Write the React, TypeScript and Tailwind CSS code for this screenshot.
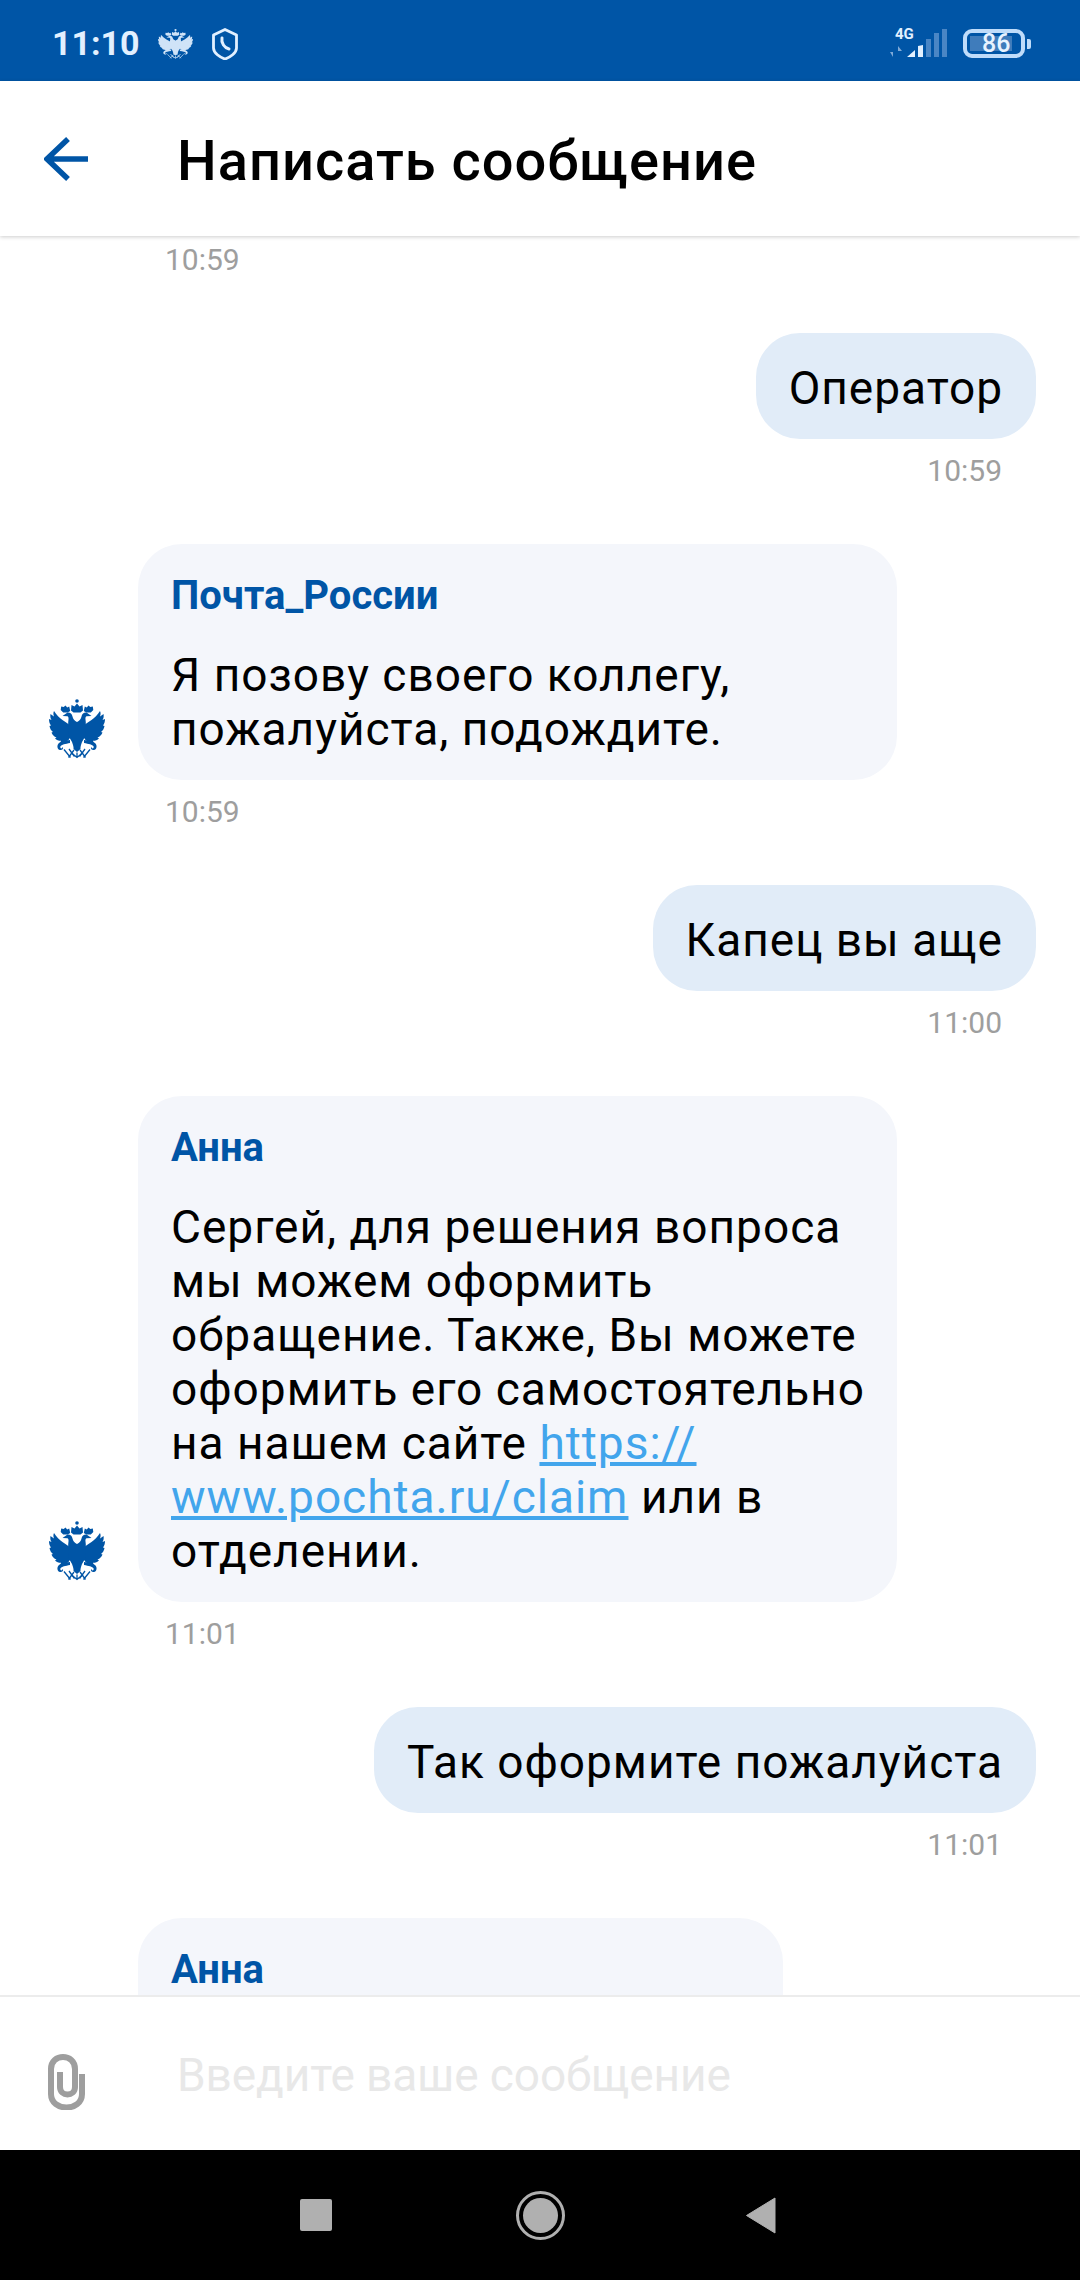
import type { ReactNode } from 'react';

// one half of the eagle, the other half is mirrored
function EagleHalf() {
    return (
        <>
            <path d="M22 27C17 23 10 20 5 12c-1 2-.6 4 0 5.500L1.500 15c-.5 2.500 0 4.500 1 6L0 20c0 2.500.5 4.500 2 6.500L.5 27c.5 2.500 1.500 4.500 3.500 6l-1.500.5c1 2.500 2.500 4 5 5l-1.500 1c1.500 1.500 3.500 2.300 6 2.300l-.5 1.700c3 .5 6-.5 8-2.500L23 36z" />
            <path d="M28 23c-2.500-1-4-3-4.500-5.500-.5-2.700-2.500-4.300-5-4L13.500 17l5 .3c1 .4 1.200 1.700 1 3.200-.5 3.500-.5 6.500.5 9.500l-1 6 4 7 2 6 3 3z" />
            <path d="M16.500 6.500l1.700 2 2-1 1 4.500-2.500 1.500h-4.500l-2.500-2.500.5-3.500 2.500.5z" />
            <path d="M21 41c-5 .5-9.500 1-11.500 3.500-2 2.700-1 6 1.500 6.500 2 .4 3.500-1 3-3l-1.500 1.500c-1 0-1.500-1-1-2.200 1-1.800 5-2.300 9.500-3.300z" />
            <path d="M15 50.500l6.500 8M20 50l5.500 7.500M25 51l-5.500 7.500" stroke="currentColor" strokeWidth="1.300" fill="none" />
        </>
    );
}

function Eagle({ className }: { className?: string }) {
    return (
        <svg viewBox="0 0 56 60" preserveAspectRatio="none" className={className} fill="currentColor">
            <circle cx="28" cy="2" r="1.800" />
            <path d="M22.500 6l3 1.500L28 4.500l2.500 3 3-1.500.5 5.500-2.500 2h-7l-2.500-2z" />
            <path d="M26.500 24h3l2 26-3.500 3-3.500-3z" />
            <path d="M22 53.500l6 5 6-5M28 53.500v5" stroke="currentColor" strokeWidth="1.300" fill="none" />
            <EagleHalf />
            <g transform="translate(56 0) scale(-1 1)">
                <EagleHalf />
            </g>
        </svg>
    );
}

function UserMessage({ text, time }: { text: string; time: string }) {
    return (
        <div className="flex flex-col items-end pr-[44px] mt-[55px]">
            <div className="bg-[#e1ecf8] rounded-[44px] px-[33px] pt-[28px] pb-[24px] text-[46px] leading-[54px] tracking-[1px] text-black">
                {text}
            </div>
            <div className="mt-[14px] pr-[34px] text-[30px] leading-[36px] text-[#9e9e9e]">{time}</div>
        </div>
    );
}

function BotMessage({ name, time, width, children }: { name: string; time: string; width: string; children: ReactNode }) {
    return (
        <div className="mt-[55px] pl-[138px] flex flex-col items-start">
            <div className="relative">
                <Eagle className="absolute left-[-89px] bottom-[21px] w-[56px] h-[60px] text-[#0055a6]" />
                <div className={`${width} bg-[#f4f6fb] rounded-[44px] px-[33px] pt-[28px] pb-[24px]`}>
                    <div className="text-[40px] leading-[47px] font-bold text-[#0055a6]">{name}</div>
                    <div className="mt-[29px] text-[46px] leading-[54px] tracking-[1px] text-black whitespace-nowrap">{children}</div>
                </div>
            </div>
            <div className="mt-[14px] pl-[27px] text-[30px] leading-[36px] text-[#9e9e9e]">{time}</div>
        </div>
    );
}

export default function App() {
    return (
        <div className="w-[1080px] h-[2280px] flex flex-col bg-white overflow-hidden font-['Roboto',sans-serif]">
            {/* status bar */}
            <div className="h-[81px] shrink-0 bg-[#0055a6] flex items-center justify-between pt-[6px] pl-[52px] pr-[49px] text-[#e2f0ff]">
                <div className="flex items-center">
                    <span className="w-[88px] text-[34px] font-bold">11:10</span>
                    <Eagle className="ml-[18px] w-[35px] h-[30px] text-[#cfe3f7]" />
                    <svg viewBox="0 0 26 32" className="ml-[19px] w-[26px] h-[32px]" fill="none" stroke="currentColor" strokeWidth="2.800">
                        <path d="M13 1.500L24.500 7v13c0 5-6.500 9.500-11.500 11C8 29.500 1.500 25 1.500 20V7z" strokeLinejoin="round" />
                        <path d="M10 10c-1 5 2.500 10 7 11" strokeWidth="3" strokeLinecap="round" />
                    </svg>
                </div>
                <div className="flex items-center">
                    <div className="relative w-[57px] h-[29px] mr-[16px]">
                        <span className="absolute left-[5px] top-[-4px] text-[15px] leading-[18px] font-bold">4G</span>
                        <svg viewBox="0 0 57 29" className="w-[57px] h-[29px]" fill="#e2f0ff">
                            <path d="M3 17v11L0 23h3zM8 28V17l4 5H8z" fill="#7fa9d6" />
                            <path d="M17 28l8-7v7zM28 28V17l5-1v12z" />
                            <path d="M36 10h5v18h-5zM44 4h5v24h-5zM52 0h5v28h-5z" fill="#4a86c5" />
                        </svg>
                    </div>
                    <div className="w-[62px] h-[29px] border-[4px] border-[#bfdcfa] rounded-[9px] pl-[3px] flex items-center">
                        <div className="w-[42px] h-[15px] bg-[#3f7cbb] flex items-center pl-[12px]">
                            <span className="text-[25px] leading-none font-medium text-[#e8f3ff]">86</span>
                        </div>
                    </div>
                    <div className="w-[4px] h-[10px] ml-[2px] bg-[#bfdcfa] rounded-r-[2px]" />
                </div>
            </div>

            {/* header */}
            <div className="relative z-10 h-[155px] shrink-0 bg-white flex items-center shadow-[0_1px_4px_rgba(0,0,0,0.2)]">
                <svg viewBox="0 0 44 44" className="ml-[44px] w-[44px] h-[44px]" fill="none" stroke="#0055a6" strokeWidth="5.500">
                    <path d="M44 22H3M24 2L3 22l21 20" />
                </svg>
                <h1 className="ml-[89px] mt-[4px] text-[56px] leading-none font-medium tracking-[1px] text-black">Написать сообщение</h1>
            </div>

            {/* messages */}
            <div className="flex-1 overflow-hidden pt-[6px]">
                <div className="pl-[165px] text-[30px] leading-[36px] text-[#9e9e9e]">10:59</div>
                <UserMessage text="Оператор" time="10:59" />
                <BotMessage name="Почта_России" time="10:59" width="w-[759px]">
                    Я позову своего коллегу,<br />пожалуйста, подождите.
                </BotMessage>
                <UserMessage text="Капец вы аще" time="11:00" />
                <BotMessage name="Анна" time="11:01" width="w-[759px]">
                    Сергей, для решения вопроса<br />мы можем оформить<br />обращение. Также, Вы можете<br />оформить его самостоятельно<br />на нашем сайте <span className="text-[#42a5ec] underline">https://<br />www.pochta.ru/claim</span> или в<br />отделении.
                </BotMessage>
                <UserMessage text="Так оформите пожалуйста" time="11:01" />
                <BotMessage name="Анна" time="" width="w-[645px]">
                    &nbsp;
                </BotMessage>
            </div>

            {/* input */}
            <div className="relative z-10 h-[155px] shrink-0 bg-white border-t-2 border-[#ececec] flex items-center">
                <svg viewBox="0 0 39 56" className="ml-[47px] mt-[17px] w-[39px] h-[56px]" fill="none" stroke="#9e9e9e" strokeWidth="6">
                    <path d="M35 20v20c0 18-31 18-31 0V15C4-1 28-1 28 15v18c0 10-15 10-15 0V18" />
                </svg>
                <span className="ml-[91px] mt-[3px] text-[46px] text-[#e8e8e8] tracking-[-0.1px]">Введите ваше сообщение</span>
            </div>

            {/* nav bar */}
            <div className="h-[130px] shrink-0 bg-black flex items-center justify-center pr-[4px]">
                <div className="w-[32px] h-[32px] bg-[#b0b0b0] rounded-[2px] mr-[184px]" />
                <div className="w-[49px] h-[49px] rounded-full border-[3px] border-[#b0b0b0] p-[4px] mr-[180px]">
                    <div className="w-full h-full rounded-full bg-[#b0b0b0]" />
                </div>
                <svg viewBox="0 0 31 37" className="w-[31px] h-[37px]" fill="#b0b0b0">
                    <path d="M30 1v35L1.500 18.500z" stroke="#b0b0b0" strokeLinejoin="round" />
                </svg>
            </div>
        </div>
    );
}
